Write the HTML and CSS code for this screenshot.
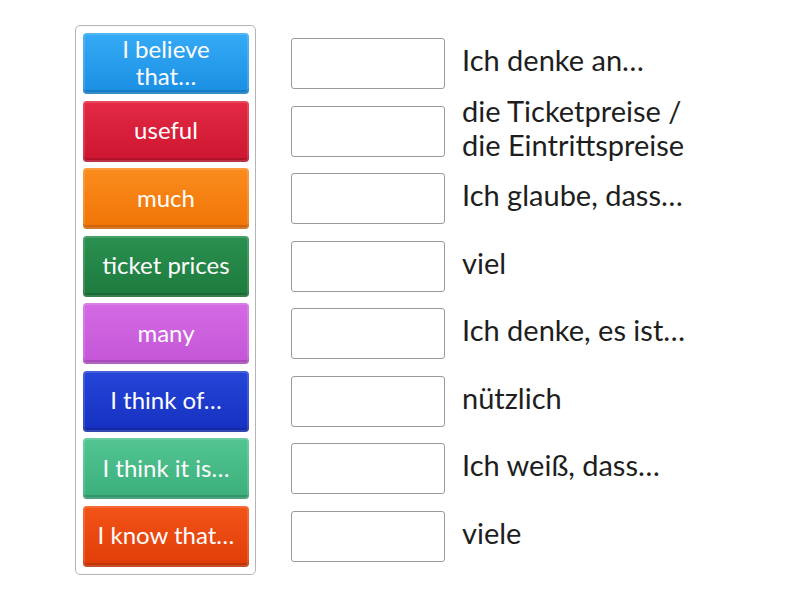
FILE: index.html
```html
<!DOCTYPE html>
<html lang="en">
<head>
<meta charset="utf-8">
<title>Match up</title>
<link rel="stylesheet" href="styles.css">
</head>
<body>
<div class="game">
  <div class="bank">
    <div class="tile blue">I believe that…</div>
    <div class="tile red">useful</div>
    <div class="tile orange">much</div>
    <div class="tile green">ticket prices</div>
    <div class="tile violet">many</div>
    <div class="tile navy">I think of…</div>
    <div class="tile mint">I think it is…</div>
    <div class="tile redorange">I know that…</div>
  </div>
  <div class="targets">
    <div class="row"><div class="slot"></div><div class="label">Ich denke an…</div></div>
    <div class="row"><div class="slot"></div><div class="label">die Ticketpreise /<br>die Eintrittspreise</div></div>
    <div class="row"><div class="slot"></div><div class="label">Ich glaube, dass…</div></div>
    <div class="row"><div class="slot"></div><div class="label">viel</div></div>
    <div class="row"><div class="slot"></div><div class="label">Ich denke, es ist…</div></div>
    <div class="row"><div class="slot"></div><div class="label">nützlich</div></div>
    <div class="row"><div class="slot"></div><div class="label">Ich weiß, dass…</div></div>
    <div class="row"><div class="slot"></div><div class="label">viele</div></div>
  </div>
</div>
</body>
</html>
```

FILE: styles.css
```css
html, body {
  margin: 0;
  padding: 0;
  background: #ffffff;
}

body {
  font-family: "Lato", "Open Sans", sans-serif;
}

.game {
  display: flex;
  align-items: flex-start;
  padding: 25px 0 0 75px;
}

.bank {
  display: flex;
  flex-direction: column;
  gap: 6.5px;
  padding: 7px 6px 7px 7px;
  border: 1px solid #b4b4b4;
  border-radius: 5px;
}

.tile {
  box-sizing: border-box;
  width: 166px;
  height: 61px;
  display: flex;
  align-items: center;
  justify-content: center;
  text-align: center;
  padding: 0 10px 3px;
  border-radius: 4px;
  color: #fdfdfd;
  font-size: 24px;
  line-height: 27px;
  box-shadow: inset 0 0 0 2px rgba(255, 255, 255, 0.14), inset 0 -4px 0 rgba(0, 0, 0, 0.14);
}

.blue { background: linear-gradient(#35aaf5, #1a8fe3); }
.red { background: linear-gradient(#e42a44, #cc1530); }
.orange { background: linear-gradient(#fb8c1e, #f07406); }
.green { background: linear-gradient(#2a9050, #1d7a3d); }
.violet { background: linear-gradient(#d46ae4, #c456d6); }
.navy { background: linear-gradient(#2546d8, #1530c0); }
.mint { background: linear-gradient(#52c592, #3aae7b); }
.redorange { background: linear-gradient(#f25418, #e03c08); }

.targets {
  display: flex;
  flex-direction: column;
  gap: 6.5px;
  padding-top: 8px;
  margin-left: 35px;
}

.row {
  height: 61px;
  display: flex;
  align-items: center;
}

.slot {
  box-sizing: border-box;
  flex: none;
  width: 154px;
  height: 51px;
  border: 1px solid #9a9a9a;
  border-radius: 3px;
  background: #ffffff;
}

.label {
  margin-left: 17px;
  padding-bottom: 7px;
  color: #1e1e1e;
  font-size: 29px;
  line-height: 34px;
  white-space: nowrap;
}
```
